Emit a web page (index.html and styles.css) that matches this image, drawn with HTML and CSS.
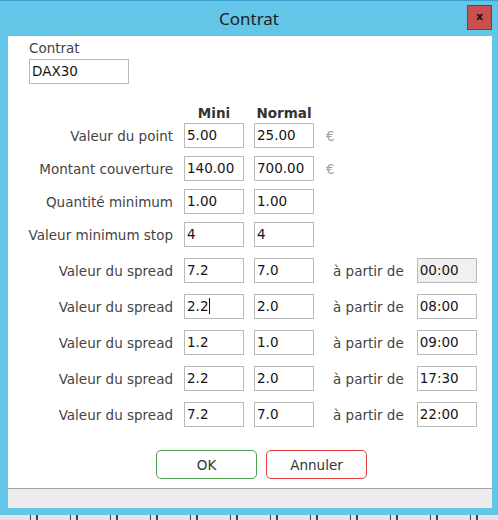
FILE: index.html
```html
<!DOCTYPE html>
<html lang="fr">
<head>
<meta charset="utf-8">
<title>Contrat</title>
<link rel="stylesheet" href="styles.css">
</head>
<body>
<div class="window">
  <div class="titlebar">
    <div></div>
    <div class="title">Contrat</div>
    <div class="close">x</div>
  </div>
  <div class="panel">
    <div class="contract">
      <div class="lbl">Contrat</div>
      <div class="field wide">DAX30</div>
    </div>
    <div class="grid heads">
      <div></div><div class="hdr">Mini</div><div class="hdr">Normal</div>
    </div>
    <div class="grid top">
      <div class="label">Valeur du point</div><div class="field">5.00</div><div class="field">25.00</div><div class="unit">€</div>
      <div class="label">Montant couverture</div><div class="field">140.00</div><div class="field">700.00</div><div class="unit">€</div>
      <div class="label">Quantité minimum</div><div class="field">1.00</div><div class="field">1.00</div><div></div>
      <div class="label">Valeur minimum stop</div><div class="field">4</div><div class="field">4</div><div></div>
    </div>
    <div class="grid spread">
      <div class="label">Valeur du spread</div><div class="field">7.2</div><div class="field">7.0</div><div class="from">à partir de</div><div class="field time disabled">00:00</div>
      <div class="label">Valeur du spread</div><div class="field">2.2<span class="caret"></span></div><div class="field">2.0</div><div class="from">à partir de</div><div class="field time">08:00</div>
      <div class="label">Valeur du spread</div><div class="field">1.2</div><div class="field">1.0</div><div class="from">à partir de</div><div class="field time">09:00</div>
      <div class="label">Valeur du spread</div><div class="field">2.2</div><div class="field">2.0</div><div class="from">à partir de</div><div class="field time">17:30</div>
      <div class="label">Valeur du spread</div><div class="field">7.2</div><div class="field">7.0</div><div class="from">à partir de</div><div class="field time">22:00</div>
    </div>
    <div class="actions">
      <button class="btn ok">OK</button>
      <button class="btn cancel">Annuler</button>
    </div>
  </div>
  <div class="status"></div>
</div>
<div class="desktop"></div>
</body>
</html>
```
FILE: styles.css
```css
html, body {
  margin: 0;
  padding: 0;
  background: #e4e4e4;
}
body {
  font-family: "DejaVu Sans", Verdana, sans-serif;
  font-size: 13.5px;
  color: #3a3a3a;
}
.window {
  width: 498px;
  height: 515px;
  box-sizing: border-box;
  background: #63c6e9;
  border-top: 1px solid #3c9fcf;
  display: flex;
  flex-direction: column;
}
.titlebar {
  height: 35px;
  display: grid;
  grid-template-columns: 1fr auto 1fr;
}
.title {
  font-family: "Noto Sans", sans-serif;
  font-size: 17px;
  line-height: 35px;
  color: #1e1e1e;
}
.close {
  justify-self: end;
  align-self: start;
  margin-top: 4px;
  margin-right: 6px;
  width: 23px;
  height: 23px;
  border: 1px solid #7e3a3a;
  background: #c8504f;
  color: #111;
  font-weight: bold;
  font-size: 11px;
  line-height: 21px;
  text-align: center;
}
.panel {
  margin: 0 6px 0 8px;
  height: 452px;
  background: #fff;
}
.contract {
  padding: 4px 0 0 21px;
}
.lbl {
  line-height: 16px;
  color: #444;
}
.field {
  height: 25px;
  box-sizing: border-box;
  border: 1px solid #b9b9b9;
  padding-left: 2px;
  line-height: 22px;
  color: #151515;
  background: #fff;
  white-space: nowrap;
}
.field.wide {
  width: 100px;
  margin-top: 3px;
}
.field.disabled {
  background: #f0f0f0;
}
.caret {
  display: inline-block;
  width: 1px;
  height: 16px;
  background: #111;
  vertical-align: -3px;
  margin-left: 1px;
}
.grid {
  display: grid;
  grid-template-columns: 166px 60px 60px auto;
  justify-content: start;
  column-gap: 10px;
  align-items: center;
}
.spread {
  grid-template-columns: 166px 60px 60px auto auto;
}
.heads {
  margin-top: 21px;
}
.hdr {
  font-weight: bold;
  text-align: center;
  line-height: 16px;
  color: #333;
}
.top {
  margin-top: 2px;
  row-gap: 8px;
}
.spread {
  margin-top: 11px;
  row-gap: 11px;
}
.label {
  text-align: right;
  padding-right: 1px;
  color: #444;
  white-space: nowrap;
}
.unit {
  margin-left: 2px;
  color: #a0a0a0;
}
.from {
  margin-left: 9px;
  color: #444;
}
.field.time {
  width: 60px;
  margin-left: 3px;
}
.actions {
  display: flex;
  gap: 9px;
  margin: 23px 0 0 148px;
}
.btn {
  width: 101px;
  height: 29px;
  box-sizing: border-box;
  background: #fff;
  border-radius: 5px;
  font-family: "DejaVu Sans", Verdana, sans-serif;
  font-size: 13.5px;
  color: #333;
  padding: 0;
}
.btn.ok {
  border: 1px solid #4ea34e;
}
.btn.cancel {
  border: 1px solid #e23c3c;
}
.status {
  margin: 0 6px 0 8px;
  height: 19px;
  border-top: 1px solid #a5a5a5;
  background: #ececec;
}
.desktop {
  height: 5px;
  background: repeating-linear-gradient(90deg, #e4e4e4 0 30px, #444 30px 31px, #e4e4e4 31px 36px, #444 36px 38px, #e4e4e4 38px 40px);
}
```
